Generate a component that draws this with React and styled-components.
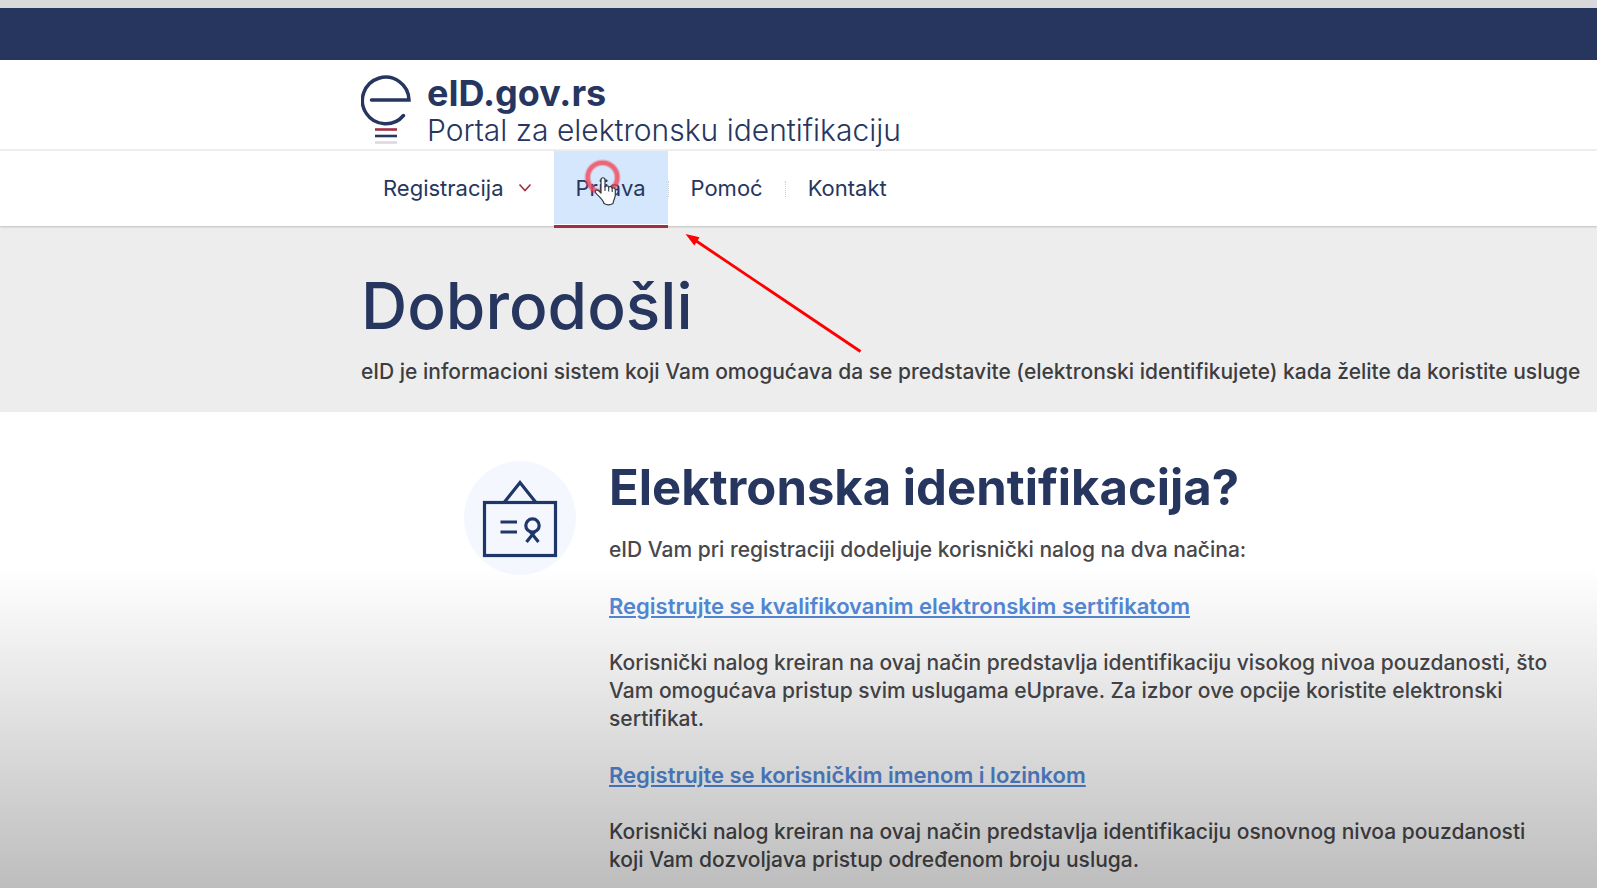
import React from 'react';
import styled, { createGlobalStyle } from 'styled-components';

const COLORS = {
  navy: '#26365f',
  text: '#48484b',
  red: '#a03048',
  link: '#5489d8',
  active: '#d5e7fd',
  hero: '#ededed',
  line: '#efeff1',
};

const GlobalStyle = createGlobalStyle`
  * {
    box-sizing: border-box;
  }
  body {
    margin: 0;
    background: white;
    color: ${COLORS.text};
    font-family: Inter, 'Open Sans', sans-serif;
    font-size: 21px;
    font-weight: 500;
    line-height: 28px;
  }
`;

const Page = styled.div`
  position: relative;
  min-height: 100vh;
  overflow: hidden;
`;

const TopBar = styled.div`
  height: 60px;
  background: ${COLORS.navy};
  border-top: 8px solid #d9d9d9;
`;

const Header = styled.header`
  padding: 14px 24px 2px 361px;
  border-bottom: 2px solid ${COLORS.line};
`;

const Brand = styled.a`
  display: flex;
  gap: 16px;
  color: ${COLORS.navy};
  text-decoration: none;
`;

const BrandText = styled.div`
  display: flex;
  flex-direction: column;
`;

const BrandName = styled.strong`
  font-size: 36px;
  font-weight: 700;
  line-height: 39px;
`;

const Tagline = styled.span`
  font-size: 30px;
  font-weight: 300;
  line-height: 34px;
`;

const Nav = styled.nav`
  position: relative;
  display: flex;
  height: 75px;
  padding-left: 361px;
  background: white;
  box-shadow: 0 1px 2px rgba(0, 0, 0, 0.2);
  font-size: 22px;
  font-weight: 400;
`;

const NavItem = styled.a`
  position: relative;
  display: flex;
  align-items: center;
  gap: 14px;
  height: 73px;
  padding: 0 22px;
  background: ${(p) => (p.$active ? COLORS.active : 'transparent')};
  color: ${COLORS.navy};
  text-decoration: none;

  &::after {
    content: '';
    display: ${(p) => (p.$active ? 'block' : 'none')};
    position: absolute;
    left: 0;
    right: 0;
    top: 100%;
    height: 3px;
    margin-top: 1px;
    background: ${COLORS.red};
  }
`;

const Divider = styled.span`
  align-self: center;
  height: 16px;
  border-left: 1px dotted #cfd0d6;
`;

const Pointer = styled.svg`
  position: absolute;
  left: 30px;
  top: 8px;
`;

const Hero = styled.section`
  padding: 44px 0 26px 361px;
  background: ${COLORS.hero};
`;

const Title = styled.h1`
  margin: 0 0 16px;
  color: ${COLORS.navy};
  font-size: 64px;
  font-weight: 500;
  line-height: 72px;
`;

const Lead = styled.p`
  margin: 0;
  color: #3d3d40;
  white-space: nowrap;
`;

const Article = styled.main`
  display: flex;
  align-items: flex-start;
  gap: 33px;
  padding: 49px 32px 0 464px;
`;

const Badge = styled.svg`
  flex: none;
`;

const Copy = styled.div`
  flex: 1;
`;

const Heading = styled.h2`
  margin: 0 0 21px;
  color: ${COLORS.navy};
  font-size: 49px;
  font-weight: 700;
  line-height: 54px;
`;

const Paragraph = styled.p`
  margin: 0 0 28px;

  &:last-child {
    margin-bottom: 0;
  }
`;

const TextLink = styled.a`
  color: ${COLORS.link};
  font-size: 22px;
  font-weight: 600;
  text-decoration: underline;
`;

const Shade = styled.div`
  position: absolute;
  left: 0;
  right: 0;
  bottom: 0;
  height: 320px;
  background: linear-gradient(transparent, rgba(0, 0, 0, 0.26));
  pointer-events: none;
`;

const Arrow = styled.svg`
  position: absolute;
  left: 680px;
  top: 230px;
  pointer-events: none;
`;

const Logo = () => (
  <svg width='50' height='70' viewBox='0 0 50 70' fill='none' aria-hidden='true'>
    <path
      d='M10.500 26H48A23.300 23.300 0 1 0 42.500 41.500'
      stroke={COLORS.navy}
      strokeWidth='3.500'
      strokeLinecap='round'
    />
    <path d='M14 55.500H36' stroke={COLORS.red} strokeWidth='2.600' />
    <path d='M14 62H36' stroke={COLORS.navy} strokeWidth='2.600' />
    <path d='M14 68.500H36' stroke='#dfd8de' strokeWidth='2.600' />
  </svg>
);

const Chevron = () => (
  <svg width='14' height='10' viewBox='0 0 14 10' fill='none' aria-hidden='true'>
    <path d='M1.500 1.500L7 7.500L12.500 1.500' stroke={COLORS.red} strokeWidth='1.600' />
  </svg>
);

const ClickPointer = () => (
  <Pointer width='44' height='52' viewBox='0 0 44 52' fill='none' aria-hidden='true'>
    <circle cx='18.500' cy='18.500' r='14.800' stroke='#f2475a' strokeOpacity='0.350' strokeWidth='6.500' />
    <circle cx='18.500' cy='18.500' r='14.800' stroke='#f2475a' strokeOpacity='0.700' strokeWidth='4' />
    <path
      d='M17 21C17 18 21 18 21 21V28C21.500 26.300 24.500 26.500 24.700 28.300C25.500 27 28 27.300 28.200 29.200C29.500 28.300 31.300 29 31.300 31V36C31.300 39 29.500 40.500 29 44.500C26.500 46 22.500 46 20 44.500C19 40 14.500 37.500 11.500 33.500C10.500 31.500 13 30 15 32L17 34Z'
      fill='white'
      stroke='#333842'
      strokeWidth='1.200'
      strokeLinejoin='round'
    />
    <path d='M21 27V32M24.700 28V32.500M28.200 29V33' stroke='#333842' strokeWidth='1.100' />
  </Pointer>
);

const Certificate = () => (
  <Badge width='112' height='114' viewBox='0 0 112 114' fill='none' aria-hidden='true'>
    <ellipse cx='56' cy='57' rx='56' ry='57' fill='#f4f8fe' />
    <g stroke='#1f3768' strokeWidth='3.200'>
      <rect x='20.500' y='41.500' width='71' height='53' />
      <path d='M40.500 41L56 21.500L71.500 41' />
      <path d='M36.500 61H53M36.500 71H53' />
      <circle cx='68.500' cy='64.500' r='6.700' />
      <path d='M70.500 71L62.500 81M66.500 71L74.500 81' />
    </g>
  </Badge>
);

const App = () => {
  return (
    <>
      <GlobalStyle />
      <Page>
        <TopBar />
        <Header>
          <Brand href='#'>
            <Logo />
            <BrandText>
              <BrandName>eID.gov.rs</BrandName>
              <Tagline>Portal za elektronsku identifikaciju</Tagline>
            </BrandText>
          </Brand>
        </Header>
        <Nav>
          <NavItem href='#registracija'>
            Registracija
            <Chevron />
          </NavItem>
          <NavItem href='#prijava' $active>
            Prijava
            <ClickPointer />
          </NavItem>
          <Divider />
          <NavItem href='#pomoc'>Pomoć</NavItem>
          <Divider />
          <NavItem href='#kontakt'>Kontakt</NavItem>
        </Nav>
        <Hero>
          <Title>Dobrodošli</Title>
          <Lead>
            eID je informacioni sistem koji Vam omogućava da se predstavite (elektronski
            identifikujete) kada želite da koristite usluge
          </Lead>
        </Hero>
        <Article>
          <Certificate />
          <Copy>
            <Heading>Elektronska identifikacija?</Heading>
            <Paragraph>eID Vam pri registraciji dodeljuje korisnički nalog na dva načina:</Paragraph>
            <Paragraph>
              <TextLink href='#sertifikat'>
                Registrujte se kvalifikovanim elektronskim sertifikatom
              </TextLink>
            </Paragraph>
            <Paragraph>
              Korisnički nalog kreiran na ovaj način predstavlja identifikaciju visokog nivoa
              pouzdanosti, što Vam omogućava pristup svim uslugama eUprave. Za izbor ove opcije
              koristite elektronski sertifikat.
            </Paragraph>
            <Paragraph>
              <TextLink href='#lozinka'>Registrujte se korisničkim imenom i lozinkom</TextLink>
            </Paragraph>
            <Paragraph>
              Korisnički nalog kreiran na ovaj način predstavlja identifikaciju osnovnog nivoa
              pouzdanosti koji Vam dozvoljava pristup određenom broju usluga.
            </Paragraph>
          </Copy>
        </Article>
        <Shade />
        <Arrow width='184' height='126' viewBox='0 0 184 126' fill='none' aria-hidden='true'>
          <path d='M14 9.500L180.500 121.500' stroke='#ff0000' strokeWidth='2.800' />
          <path d='M5.500 4L19.500 7.300L17 11.500L14.300 15.500Z' fill='#ff0000' />
        </Arrow>
      </Page>
    </>
  );
};

export default App;
